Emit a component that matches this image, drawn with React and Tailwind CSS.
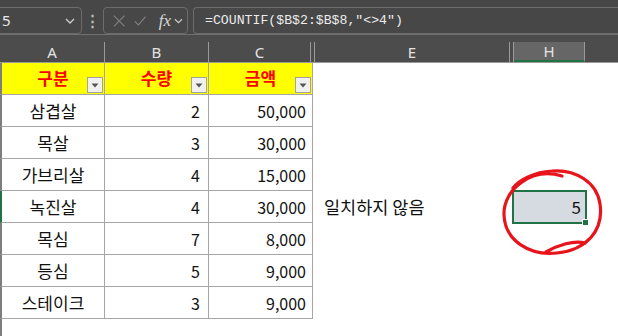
import React from "react";

const rows = [
  ["삼겹살", 2, "50,000"],
  ["목살", 3, "30,000"],
  ["가브리살", 4, "15,000"],
  ["녹진살", 4, "30,000"],
  ["목심", 7, "8,000"],
  ["등심", 5, "9,000"],
  ["스테이크", 3, "9,000"],
];

const kr = { fontFamily: '"Noto Sans CJK KR", "Noto Sans", sans-serif' };

function Chevron({ className }) {
  return (
    <svg width="10" height="6" viewBox="0 0 10 6" className={className}>
      <path d="M1 1 L5 5 L9 1" fill="none" stroke="#cfcfcf" strokeWidth="1.3" />
    </svg>
  );
}

function FilterButton() {
  return (
    <div className="absolute right-px bottom-px w-4 h-4 bg-[#f0f0f0] border border-[#a3a3a3] flex items-center justify-center">
      <svg width="8" height="5" viewBox="0 0 8 5">
        <path d="M0.5 0.5 L7.5 0.5 L4 4.5 Z" fill="#555" />
      </svg>
    </div>
  );
}

function FormulaBar() {
  return (
    <div className="h-[35px] bg-[#474747] border-b border-[#707070] flex items-start pt-[7px] relative">
      {/* name box */}
      <div className="w-[92px] -ml-[10px] h-[27px] border border-[#6c6c6c] rounded-[4px] flex items-center pl-[11px] pr-[6px] text-[#e6e6e6] text-[15px]" style={{ fontFamily: '"Noto Sans", sans-serif' }}>
        <span className="flex-1">5</span>
        <Chevron />
      </div>
      <div className="w-[21px] h-[27px] flex items-center justify-center text-[#bdbdbd] text-[15px] font-bold">⋮</div>
      {/* cancel / enter / fx */}
      <div className="w-[85px] h-[27px] border border-[#6c6c6c] rounded-[4px] flex items-center pl-[9px] pr-[4px] gap-[9px]">
        <svg width="14" height="14" viewBox="0 0 14 14">
          <path d="M1 1 L13 13 M13 1 L1 13" stroke="#808080" strokeWidth="1.3" />
        </svg>
        <svg width="14" height="12" viewBox="0 0 14 12">
          <path d="M1 6.5 L5 10.5 L13 1" fill="none" stroke="#808080" strokeWidth="1.3" />
        </svg>
        <span className="italic text-[#d8d8d8] text-[17px] leading-none ml-[3px]" style={{ fontFamily: '"Liberation Serif", serif' }}>fx</span>
        <Chevron className="-ml-[6px]" />
      </div>
      {/* formula */}
      <div className="ml-[5px] flex-1 h-[27px] border border-[#6c6c6c] border-r-0 rounded-l-[4px] flex items-center pl-[11px] text-[#ececec] text-[13.2px]" style={{ fontFamily: '"Liberation Mono", monospace' }}>
        =COUNTIF($B$2:$B$8,"&lt;&gt;4")
      </div>
    </div>
  );
}

function HeaderRow() {
  const cls = "h-full flex items-center justify-center text-[#e4e4e4] text-[15px]";
  return (
    <div className="bg-[#4c4c4c] pt-[7px] border-b border-[#9a9a9a]" style={{ fontFamily: '"Noto Sans", sans-serif' }}>
      <div className="flex h-[20px]">
        <div className={cls + " w-[105px] border-r border-[#9a9a9a]"}>A</div>
        <div className={cls + " w-[104px] border-r border-[#9a9a9a]"}>B</div>
        <div className={cls + " w-[102px] border-r border-[#9a9a9a]"}>C</div>
        <div className="w-[4px] border-r border-[#9a9a9a]"></div>
        <div className={cls + " w-[195px] border-r border-[#9a9a9a]"}>E</div>
        <div className="w-[4px] border-r border-[#9a9a9a]"></div>
        <div className={cls + " w-[71px] bg-[#666666] border-r border-[#9a9a9a] border-b-2 border-b-[#217346]"}>H</div>
        <div className="flex-1"></div>
      </div>
    </div>
  );
}

export default function App() {
  return (
    <div className="w-[618px] h-[336px] overflow-hidden bg-white relative" style={kr}>
      <FormulaBar />
      <HeaderRow />

      {/* table header */}
      <div className="flex h-[32px]">
        {["구분", "수량", "금액"].map((t, i) => (
          <div
            key={t}
            className={
              "relative bg-[#ffff00] border-r border-b border-[#a6a6a6] flex items-center justify-center text-[#ff0000] font-bold text-[17px] " +
              (i === 0 ? "w-[105px] border-l-2 border-l-[#7d7d7d]" : "w-[104px]")
            }
          >
            <span className="-mt-[1px]">{t}</span>
            <FilterButton />
          </div>
        ))}
      </div>

      {rows.map(([name, qty, amt], idx) => {
        const sel = idx === 3;
        return (
          <div key={name} className="flex h-[32px] text-[16px] text-[#111]">
            <div className={"w-[105px] border-r border-b border-[#a6a6a6] border-l-2 flex items-center justify-center text-[17px] " + (sel ? "border-l-[#217346]" : "border-l-[#7d7d7d]")}>
              {name}
            </div>
            <div className="w-[104px] border-r border-b border-[#a6a6a6] flex items-center justify-end pr-[8px]">{qty}</div>
            <div className="w-[104px] border-r border-b border-[#a6a6a6] flex items-center justify-end pr-[6px]">{amt}</div>
            <div className="w-[3px]"></div>
            <div className="w-[195px] flex items-center pl-[8px] text-[17.5px]">{sel ? "일치하지 않음" : ""}</div>
            <div className="w-[3px]"></div>
            <div className="w-[71px] relative">
              {sel && (
                <div className="absolute -left-[2px] -top-[1px] w-[75px] h-[34px] border-2 border-[#217346] bg-[#d6dbe2] flex items-center justify-end pr-[4px] text-[17px]">
                  5
                  <div className="absolute -right-[4px] -bottom-[4px] w-[7px] h-[7px] bg-[#217346] border border-white"></div>
                </div>
              )}
            </div>
            <div className="flex-1"></div>
          </div>
        );
      })}
      <div className="h-[20px] border-l-2 border-l-[#7d7d7d]"></div>

      {/* hand-drawn red circle */}
      <svg className="absolute inset-0 pointer-events-none" width="618" height="336" viewBox="0 0 618 336">
        <path
          d="M 562 176 C 532 167, 503 189, 504 215 C 505 241, 530 256, 557 253 C 586 250, 604 231, 600 204 C 597 182, 575 169, 552 171 C 534 172, 519 180, 513 188"
          fill="none"
          stroke="#e8141c"
          strokeWidth="3.2"
          strokeLinecap="round"
          strokeLinejoin="round"
        />
        <path
          d="M 546 252 C 558 245, 574 240, 585 243"
          fill="none"
          stroke="#e8141c"
          strokeWidth="3.2"
          strokeLinecap="round"
        />
      </svg>
    </div>
  );
}
